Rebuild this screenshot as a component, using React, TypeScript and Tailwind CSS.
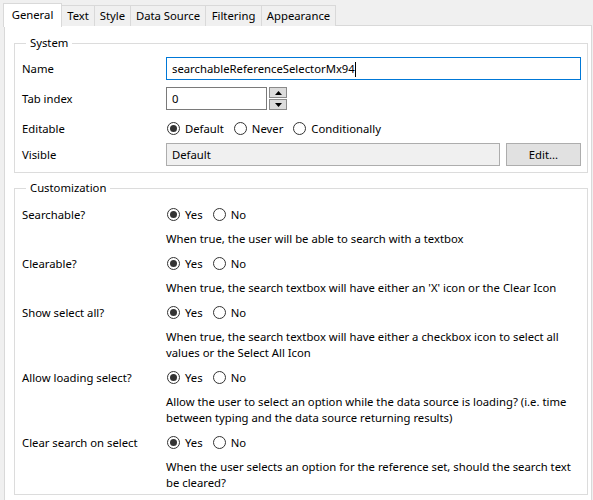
import React from "react";

function Radio({ checked, label }: { checked?: boolean; label: string }) {
  return (
    <span className="flex items-center gap-[5px]">
      <span className="w-[13px] h-[13px] rounded-full border border-[#333333] bg-white flex items-center justify-center">
        {checked && <span className="w-[7px] h-[7px] rounded-full bg-[#333333]" />}
      </span>
      <span className="pt-[2px]">{label}</span>
    </span>
  );
}

function Tab({ label, w, selected }: { label: string; w: string; selected?: boolean }) {
  if (selected) {
    return (
      <div className={`${w} h-[24px] bg-white border border-b-0 border-[#d9d9d9] flex items-center justify-center relative z-10 -mb-[1px]`}>
        {label}
      </div>
    );
  }
  return (
    <div className={`${w} h-[21px] bg-[#f0f0f0] border-t border-r border-[#d9d9d9] flex items-center justify-center`}>
      {label}
    </div>
  );
}

function Item({ label, desc }: { label: string; desc: string[] }) {
  return (
    <div className="flex">
      <div className="w-[144px] h-[22px] flex items-center pt-[2px]">{label}</div>
      <div className="flex flex-col">
        <div className="h-[22px] flex items-center gap-[10px] pl-[1px]">
          <Radio checked label="Yes" />
          <Radio label="No" />
        </div>
        <div className="mt-[6px] leading-[16px] whitespace-nowrap">
          {desc.map((d, i) => (
            <div key={i}>{d}</div>
          ))}
        </div>
      </div>
    </div>
  );
}

export default function App() {
  return (
    <div className="w-[593px] h-[500px] overflow-hidden bg-[#f0f0f0] text-[11.3px] text-black font-['Noto_Sans',sans-serif]">
      <div className="flex items-end h-[26px] pl-[3px]">
        <Tab label="General" w="w-[59px]" selected />
        <Tab label="Text" w="w-[33px]" />
        <Tab label="Style" w="w-[36px]" />
        <Tab label="Data Source" w="w-[75px]" />
        <Tab label="Filtering" w="w-[56px]" />
        <Tab label="Appearance" w="w-[74px]" />
      </div>
      <div className="ml-[4px] w-[588px] h-[480px] -mt-[1px] bg-white border border-[#d9d9d9] pl-[9px] pr-[3px] pt-[9px]">
        <fieldset className="border border-[#dcdcdc] pl-[7px] pr-[6px] pb-[6px]">
          <legend className="ml-[4px] px-[4px] leading-[16px]">System</legend>
          <div className="flex flex-col mt-[6px]">
            <div className="flex items-center h-[23px]">
              <div className="w-[144px] pt-[2px]">Name</div>
              <div className="w-[415px] h-[23px] border border-[#0078d7] flex items-center pl-[5px] pt-[1px]">
                <span>searchableReferenceSelectorMx94</span>
                <span className="w-[1px] h-[15px] bg-black" />
              </div>
            </div>
            <div className="flex items-center h-[23px] mt-[7px]">
              <div className="w-[144px] pt-[2px]">Tab index</div>
              <div className="w-[101px] h-[23px] border border-[#7a7a7a] flex items-center pl-[5px] pt-[1px]">0</div>
              <div className="ml-[2px] w-[18px] h-[23px] flex flex-col gap-[1px]">
                <div className="flex-1 bg-[#dcdcdc] border border-[#8a8a8a] flex items-center justify-center">
                  <svg width="7" height="4" viewBox="0 0 7 4"><path d="M3.5 0L7 4H0z" fill="#000" /></svg>
                </div>
                <div className="flex-1 bg-[#dcdcdc] border border-[#8a8a8a] flex items-center justify-center">
                  <svg width="7" height="4" viewBox="0 0 7 4"><path d="M0 0H7L3.5 4z" fill="#000" /></svg>
                </div>
              </div>
            </div>
            <div className="flex items-center h-[33px] pt-[4px]">
              <div className="w-[144px] pt-[2px]">Editable</div>
              <div className="flex items-center gap-[10px] pl-[1px]">
                <Radio checked label="Default" />
                <Radio label="Never" />
                <Radio label="Conditionally" />
              </div>
            </div>
            <div className="flex items-center h-[23px]">
              <div className="w-[144px] pt-[2px]">Visible</div>
              <div className="w-[334px] h-[23px] border border-[#adadad] bg-[#f0f0f0] flex items-center pl-[5px] pt-[1px]">Default</div>
              <div className="ml-[6px] w-[75px] h-[23px] border border-[#adadad] bg-[#e1e1e1] flex items-center justify-center pt-[1px]">Edit...</div>
            </div>
          </div>
        </fieldset>
        <fieldset className="mt-[7px] border border-[#dcdcdc] pl-[7px] pr-[6px] pb-[3px]">
          <legend className="ml-[4px] px-[4px] leading-[16px]">Customization</legend>
          <div className="flex flex-col gap-[5px] mt-[7px]">
            <Item label="Searchable?" desc={["When true, the user will be able to search with a textbox"]} />
            <Item label="Clearable?" desc={["When true, the search textbox will have either an 'X' icon or the Clear Icon"]} />
            <Item
              label="Show select all?"
              desc={["When true, the search textbox will have either a checkbox icon to select all", "values or the Select All Icon"]}
            />
            <Item
              label="Allow loading select?"
              desc={["Allow the user to select an option while the data source is loading? (i.e. time", "between typing and the data source returning results)"]}
            />
            <Item
              label="Clear search on select"
              desc={["When the user selects an option for the reference set, should the search text", "be cleared?"]}
            />
          </div>
        </fieldset>
      </div>
    </div>
  );
}
